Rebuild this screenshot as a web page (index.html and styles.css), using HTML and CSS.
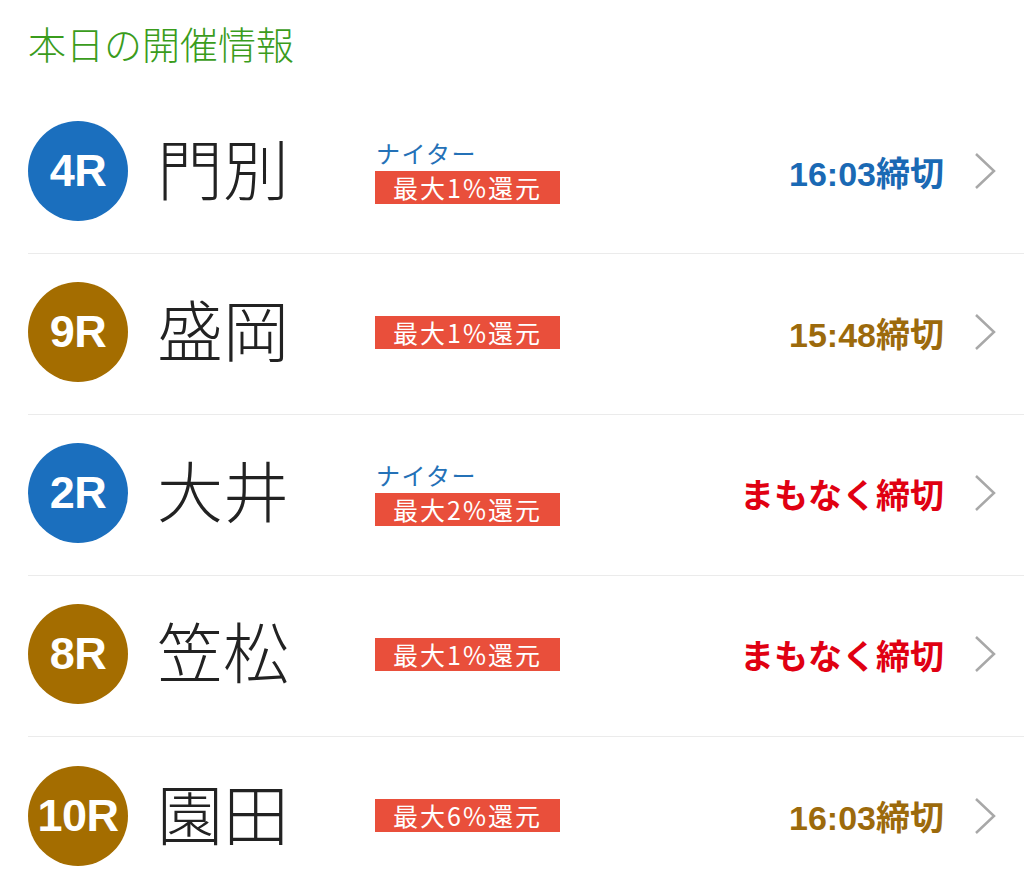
FILE: index.html
```html
<!DOCTYPE html>
<html lang="ja">
<head>
    <meta charset="UTF-8">
    <meta name="viewport" content="width=device-width, initial-scale=1.0">
    <title>本日の開催情報</title>
    <link rel="stylesheet" href="styles.css">
</head>
<body>
    <div class="page">
        <h1 class="title">本日の開催情報</h1>
        <ul class="race-list">
            <li class="race">
                <div class="race-no blue">4R</div>
                <div class="venue">門別</div>
                <div class="labels">
                    <span class="nighter">ナイター</span>
                    <span class="refund">最大1%還元</span>
                </div>
                <div class="deadline blue-text">16:03締切</div>
                <svg class="chevron" width="22" height="38" viewBox="0 0 22 38"><polyline points="2,2 20,19 2,36" fill="none" stroke="#a8a8a8" stroke-width="2.5"/></svg>
            </li>
            <li class="race">
                <div class="race-no brown">9R</div>
                <div class="venue">盛岡</div>
                <div class="labels">
                    <span class="refund">最大1%還元</span>
                </div>
                <div class="deadline brown-text">15:48締切</div>
                <svg class="chevron" width="22" height="38" viewBox="0 0 22 38"><polyline points="2,2 20,19 2,36" fill="none" stroke="#a8a8a8" stroke-width="2.5"/></svg>
            </li>
            <li class="race">
                <div class="race-no blue">2R</div>
                <div class="venue">大井</div>
                <div class="labels">
                    <span class="nighter">ナイター</span>
                    <span class="refund">最大2%還元</span>
                </div>
                <div class="deadline red-text">まもなく締切</div>
                <svg class="chevron" width="22" height="38" viewBox="0 0 22 38"><polyline points="2,2 20,19 2,36" fill="none" stroke="#a8a8a8" stroke-width="2.5"/></svg>
            </li>
            <li class="race">
                <div class="race-no brown">8R</div>
                <div class="venue">笠松</div>
                <div class="labels">
                    <span class="refund">最大1%還元</span>
                </div>
                <div class="deadline red-text">まもなく締切</div>
                <svg class="chevron" width="22" height="38" viewBox="0 0 22 38"><polyline points="2,2 20,19 2,36" fill="none" stroke="#a8a8a8" stroke-width="2.5"/></svg>
            </li>
            <li class="race">
                <div class="race-no brown">10R</div>
                <div class="venue">園田</div>
                <div class="labels">
                    <span class="refund">最大6%還元</span>
                </div>
                <div class="deadline brown-text">16:03締切</div>
                <svg class="chevron" width="22" height="38" viewBox="0 0 22 38"><polyline points="2,2 20,19 2,36" fill="none" stroke="#a8a8a8" stroke-width="2.5"/></svg>
            </li>
        </ul>
    </div>
</body>
</html>
```

FILE: styles.css
```css
*{box-sizing: border-box;}
body{
    margin: 0;
    background: #fff;
    font-family: "Liberation Sans", "Noto Sans CJK JP", sans-serif;
}
.page{
    padding-left: 28px;
}
.title{
    margin: 0;
    padding-top: 21px;
    height: 93px;
    font-family: "Noto Sans CJK JP", sans-serif;
    font-size: 38px;
    line-height: 44px;
    font-weight: 300;
    color: #3a9c1c;
}
.race-list{
    margin: 0;
    padding: 0;
    list-style: none;
}
.race{
    display: flex;
    align-items: center;
    height: 161px;
    padding-bottom: 4px;
    border-bottom: 1px solid #ebebeb;
}
.race:last-child{
    border-bottom: none;
}
.race-no{
    display: flex;
    align-items: center;
    justify-content: center;
    width: 100px;
    height: 100px;
    border-radius: 50%;
    color: #fff;
    font-size: 45px;
    font-weight: bold;
    letter-spacing: -0.5px;
    flex-shrink: 0;
}
.blue{ background: #1b6fbe; }
.brown{ background: #a46d00; }
.venue{
    width: 247px;
    padding-left: 29px;
    margin-bottom: 10px;
    font-family: "Noto Sans CJK JP", sans-serif;
    font-size: 66px;
    font-weight: 300;
    color: #222;
    line-height: 1;
    flex-shrink: 0;
}
.labels{
    display: flex;
    flex-direction: column;
    align-items: flex-start;
    gap: 5px;
}
.nighter{
    padding-left: 1px;
    font-family: "Noto Sans CJK JP", sans-serif;
    font-size: 24px;
    line-height: 27px;
    letter-spacing: 1.5px;
    color: #2471b7;
}
.refund{
    display: block;
    width: 185px;
    height: 33px;
    line-height: 33px;
    background: #e94f3b;
    color: #fff;
    font-family: "Noto Sans CJK JP", sans-serif;
    font-size: 25px;
    letter-spacing: 2px;
    text-align: center;
}
.deadline{
    margin-left: auto;
    font-family: "Liberation Sans", "Noto Sans CJK JP", sans-serif;
    font-size: 34px;
    font-weight: bold;
}
.blue-text{ color: #1a69b4; }
.brown-text{ color: #9c6a0c; }
.red-text{ color: #e00012; }
.chevron{
    margin-left: 30px;
    margin-right: 28px;
    flex-shrink: 0;
}
```
